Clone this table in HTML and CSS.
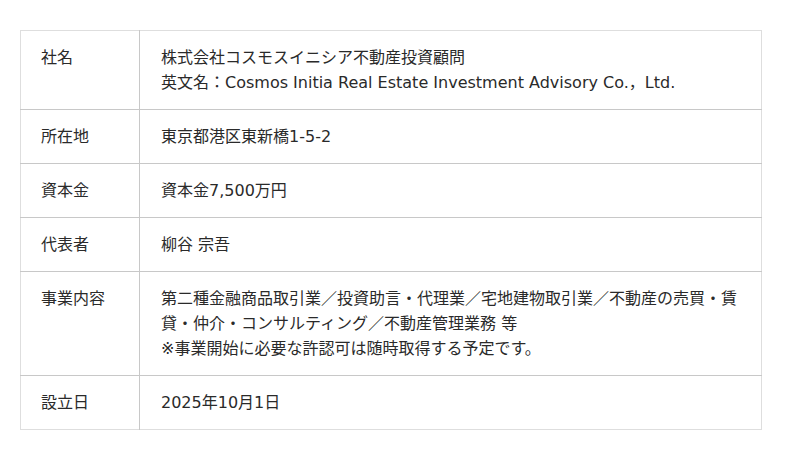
FILE: index.html
```html
<!DOCTYPE html>
<html lang="ja">
<head>
<meta charset="utf-8">
<link rel="stylesheet" href="styles.css">
</head>
<body>
<div class="wrap">
<table class="info">
<tr><th>社名</th><td>株式会社コスモスイニシア不動産投資顧問<br>英文名：Cosmos Initia Real Estate Investment Advisory Co.，Ltd.</td></tr>
<tr><th>所在地</th><td>東京都港区東新橋1-5-2</td></tr>
<tr><th>資本金</th><td>資本金7,500万円</td></tr>
<tr><th>代表者</th><td>柳谷 宗吾</td></tr>
<tr><th>事業内容</th><td>第二種金融商品取引業／投資助言・代理業／宅地建物取引業／不動産の売買・賃貸・仲介・コンサルティング／不動産管理業務 等<br>※事業開始に必要な許認可は随時取得する予定です。</td></tr>
<tr><th>設立日</th><td>2025年10月1日</td></tr>
</table>
</div>
</body>
</html>
```

FILE: styles.css
```css
html, body { margin: 0; padding: 0; background: #fff; }
.wrap { padding: 30px 38px 0 20px; }
.info {
  width: 742px;
  border-collapse: collapse;
  border: 1px solid #dedede;
  font-family: "DejaVu Sans", "Noto Sans CJK JP", sans-serif;
  font-size: 16px;
  line-height: 25px;
  color: #2a2a2a;
}
.info th, .info td {
  text-align: left;
  vertical-align: top;
  font-weight: normal;
  padding: 14px 20px;
  border-top: 1px solid #c8c8c8;
}
.info tr:first-child th, .info tr:first-child td { border-top: 1px solid #dedede; }
.info th {
  width: 78px;
  border-right: 1px solid #c8c8c8;
}
.info td { padding-left: 21px; padding-right: 20px; }
```
